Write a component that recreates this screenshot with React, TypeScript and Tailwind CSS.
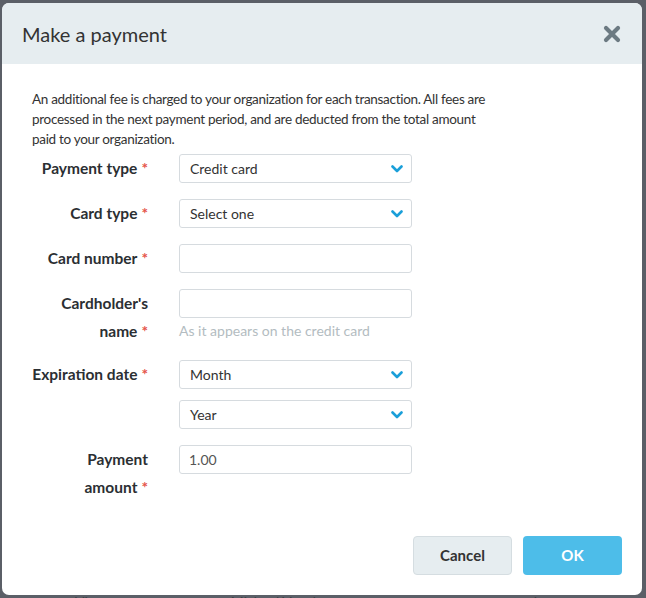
import React from 'react';

const font = { fontFamily: 'Lato, "Open Sans", sans-serif' };

function Chevron() {
  return (
    <svg width="12" height="8" viewBox="0 0 12 8" className="shrink-0">
      <path d="M1.5 1.5 L6 6 L10.5 1.5" fill="none" stroke="#1a9fd9" strokeWidth="2.6" strokeLinecap="round" strokeLinejoin="round" />
    </svg>
  );
}

function Label({ lines }: { lines: string[] }) {
  return (
    <div className="w-[146px] shrink-0 text-right text-[15.5px] font-bold leading-[29px] text-[#2b2f33]">
      {lines.map((l, i) => (
        <div key={i} className={i > 0 ? 'leading-[26px]' : ''}>
          {l}
          {i === lines.length - 1 && <span className="ml-1 text-[#e5534b]">*</span>}
        </div>
      ))}
    </div>
  );
}

function SelectBox({ value }: { value: string }) {
  return (
    <div className="flex h-[29px] w-[233px] items-center justify-between rounded-[3px] border border-[#d6dbdf] bg-white pl-[10px] pr-[8px] text-[14px] text-[#333]">
      <span>{value}</span>
      <Chevron />
    </div>
  );
}

function InputBox({ value }: { value?: string }) {
  return (
    <div className="flex h-[29px] w-[233px] items-center rounded-[3px] border border-[#d6dbdf] bg-white pl-[9px] text-[14px] text-[#555]">
      {value}
    </div>
  );
}

function Row({ label, children, className }: { label: string[]; children: React.ReactNode; className?: string }) {
  return (
    <div className={'flex gap-[31px] ' + (className ?? '')}>
      <Label lines={label} />
      <div className="flex flex-col">{children}</div>
    </div>
  );
}

export default function App() {
  return (
    <div className="relative h-[598px] w-[646px] overflow-hidden bg-[#5b5f67]" style={font}>
      <div className="ml-[2px] mt-[3px] flex h-[592px] w-[640px] flex-col overflow-hidden rounded-[7px] bg-white">
        {/* header */}
        <div className="flex h-[61px] shrink-0 items-center justify-between bg-[#e6edf0] pl-[20px] pr-[21px]">
          <h2 className="text-[20px] text-[#333]">Make a payment</h2>
          <svg width="18" height="18" viewBox="0 0 18 18">
            <path d="M3 3 L15 15 M15 3 L3 15" stroke="#6c7a82" strokeWidth="4.2" strokeLinecap="round" />
          </svg>
        </div>

        {/* body */}
        <div className="flex-1 pt-[25px]">
          <p className="ml-[30px] w-[462px] text-[13.5px] leading-[20px] tracking-[-0.3px] text-[#333]">
            An additional fee is charged to your organization for each transaction. All fees are processed in the next payment period, and are deducted from the total amount paid to your organization.
          </p>

          <div className="mt-[5px] flex flex-col">
            <Row label={['Payment type']}>
              <SelectBox value="Credit card" />
            </Row>
            <Row label={['Card type']} className="mt-[16px]">
              <SelectBox value="Select one" />
            </Row>
            <Row label={['Card number']} className="mt-[16px]">
              <InputBox />
            </Row>
            <Row label={["Cardholder's", 'name']} className="mt-[16px]">
              <InputBox />
              <span className="mt-[3px] text-[14px] leading-[20px] text-[#b3bcc1]">As it appears on the credit card</span>
            </Row>
            <Row label={['Expiration date']} className="mt-[16px]">
              <SelectBox value="Month" />
              <div className="mt-[11px]">
                <SelectBox value="Year" />
              </div>
            </Row>
            <Row label={['Payment', 'amount']} className="mt-[16px]">
              <InputBox value="1.00" />
            </Row>
          </div>
        </div>

        {/* footer */}
        <div className="flex justify-end gap-[11px] pb-[20px] pr-[20px]">
          <button className="h-[39px] w-[99px] rounded-[4px] border border-[#d5dde1] bg-[#e6edf0] text-[15px] font-bold text-[#333]">
            Cancel
          </button>
          <button className="h-[39px] w-[99px] rounded-[4px] bg-[#4dbde9] text-[15px] font-bold text-white">
            OK
          </button>
        </div>
      </div>
      <div className="flex text-[14px] leading-[14px] text-[#3c4046]">
        <span className="ml-[75px]">Visa</span>
        <span className="ml-[130px]">Michael Vaughn</span>
        <span className="ml-[205px]">Latest payment</span>
      </div>
    </div>
  );
}
